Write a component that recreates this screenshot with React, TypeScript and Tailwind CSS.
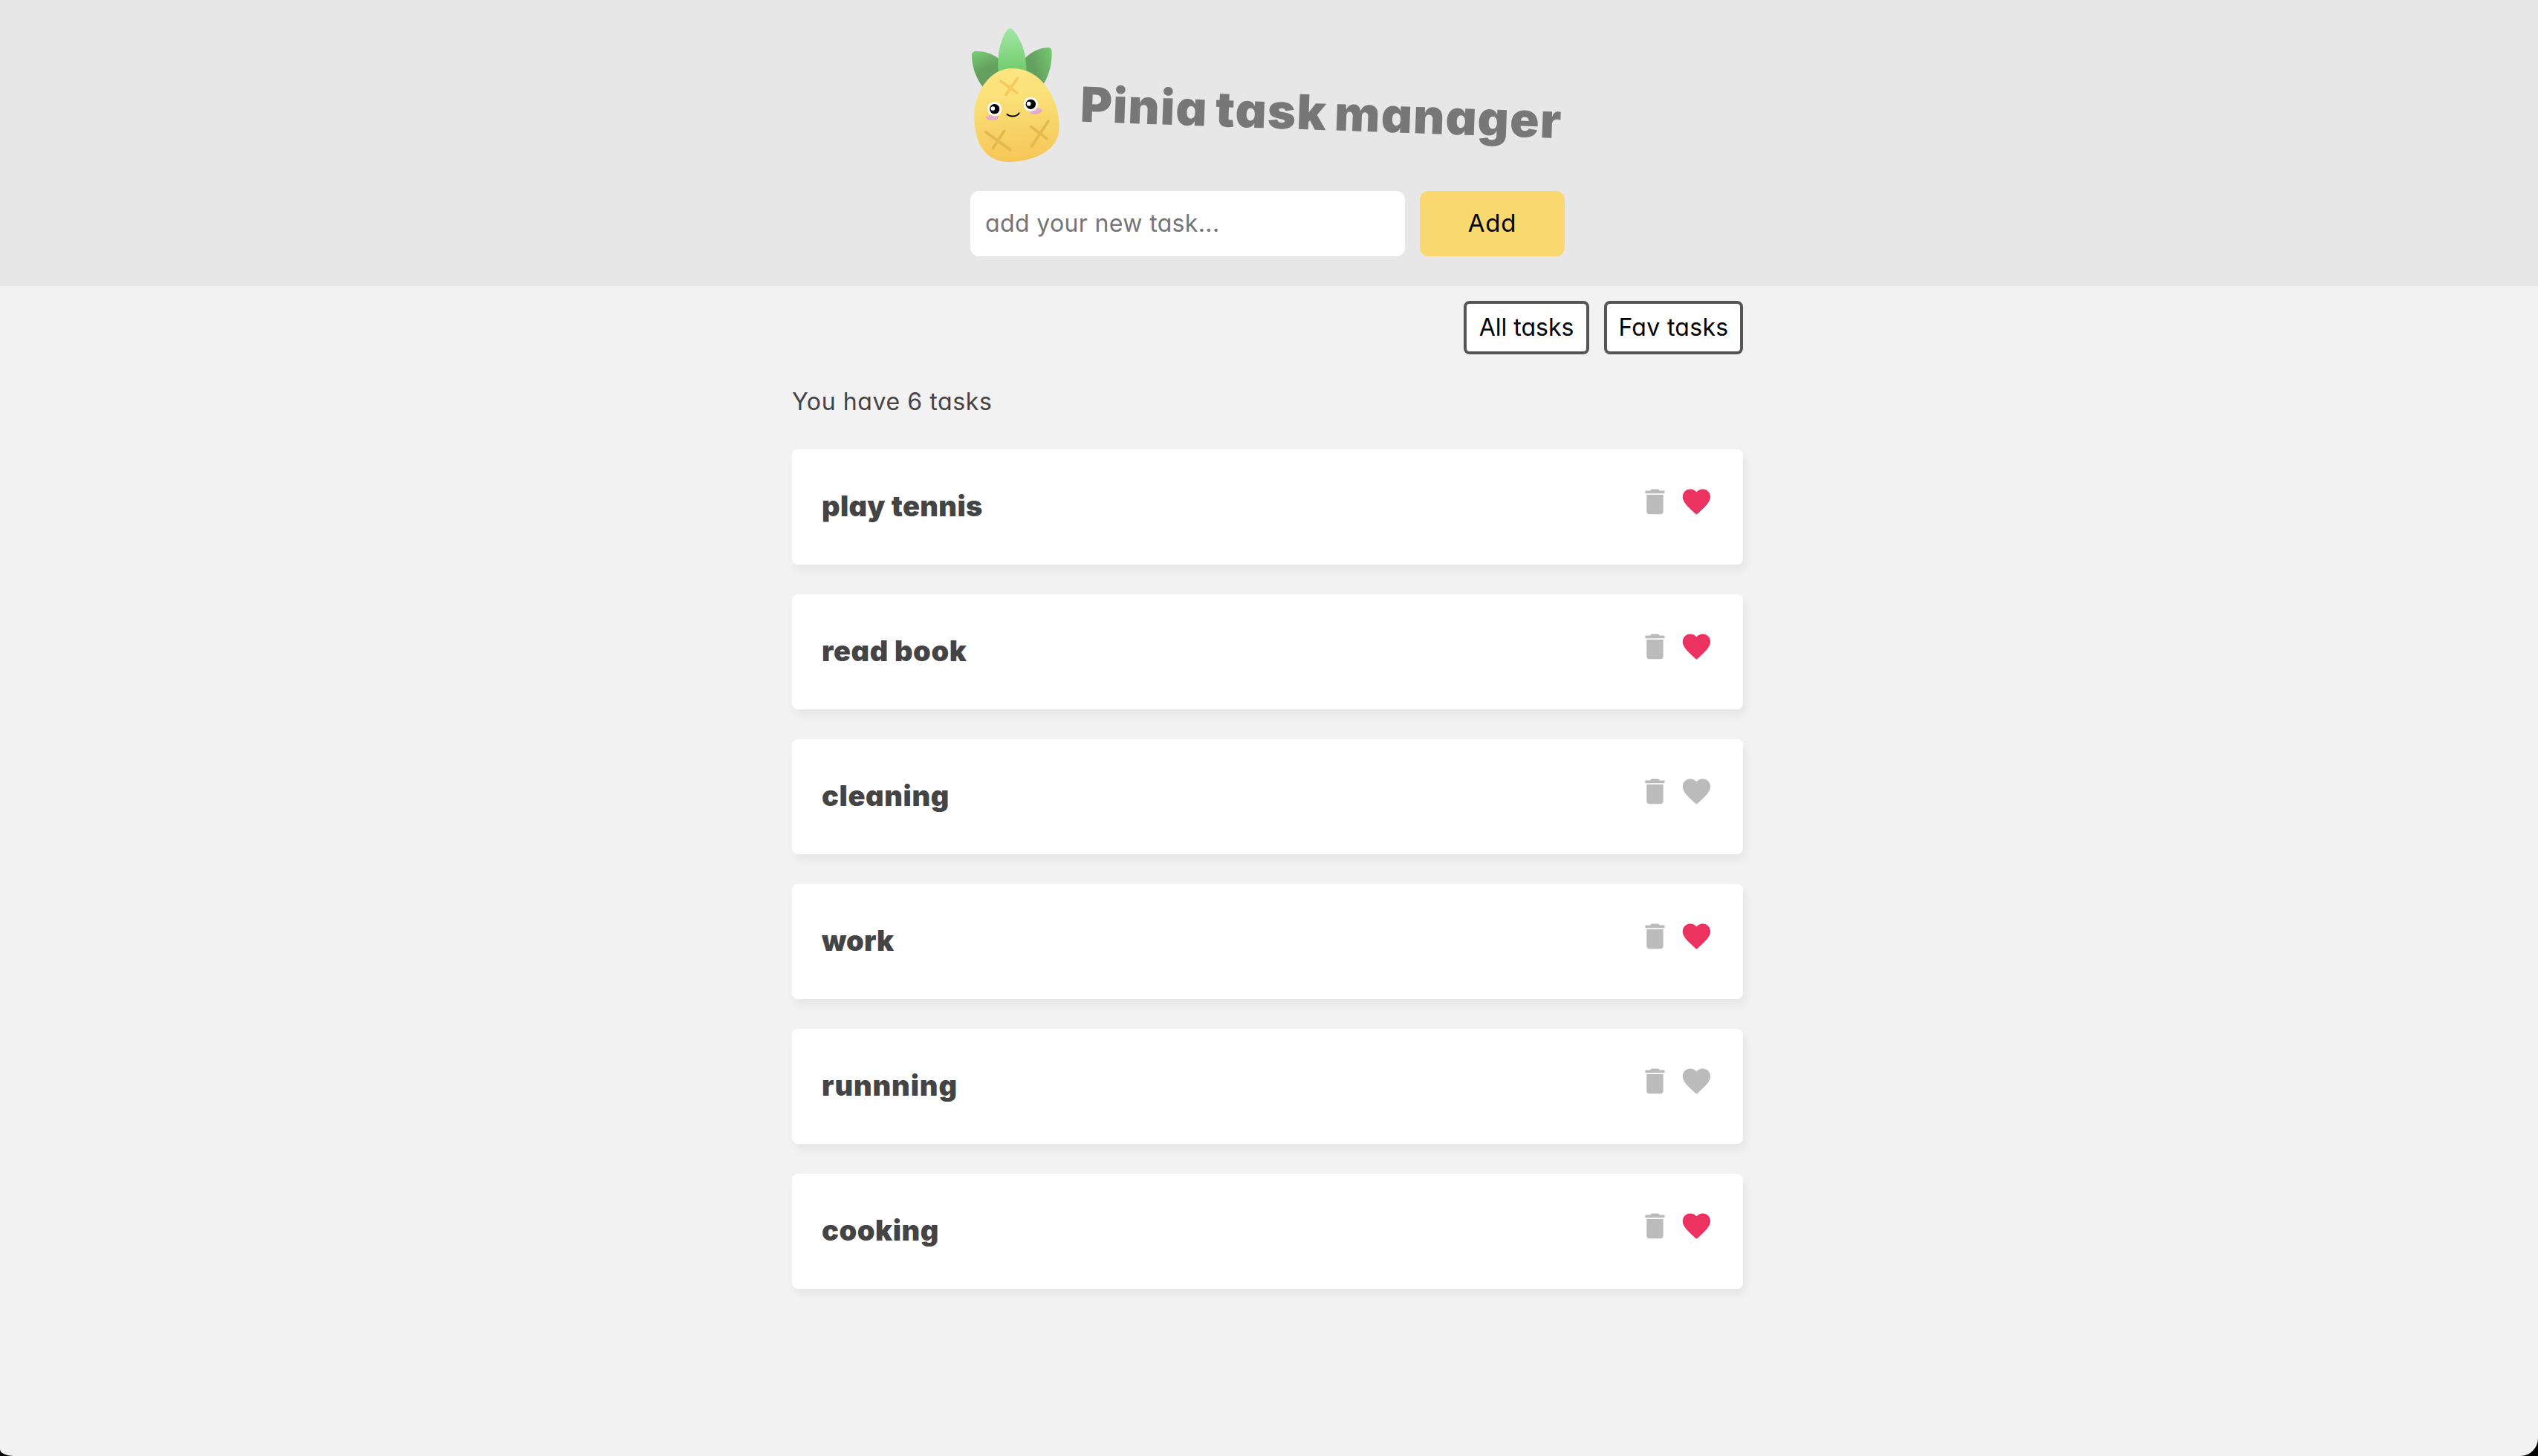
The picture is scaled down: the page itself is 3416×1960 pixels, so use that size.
import React from "react";

type Task = { id: number; title: string; isFav: boolean; tracking: string };

const TASKS: Task[] = [
  { id: 1, title: "play tennis", isFav: true, tracking: "tracking-[0.35px]" },
  { id: 2, title: "read book", isFav: true, tracking: "tracking-[0.6px]" },
  { id: 3, title: "cleaning", isFav: false, tracking: "tracking-[0.64px]" },
  { id: 4, title: "work", isFav: true, tracking: "tracking-[0.1px]" },
  { id: 5, title: "runnning", isFav: false, tracking: "tracking-[0.9px]" },
  { id: 6, title: "cooking", isFav: true, tracking: "tracking-[0.55px]" },
];

function Pineapple() {
  return (
    <svg className="block h-[182px] w-[121px] shrink-0" viewBox="48 51 363 546" fill="none">
      <defs>
        <linearGradient id="leafMid" x1="208" y1="54" x2="216" y2="230" gradientUnits="userSpaceOnUse">
          <stop stopColor="#a3e8a6" />
          <stop offset="0.85" stopColor="#78cf74" />
          <stop offset="1" stopColor="#74cb70" />
        </linearGradient>
        <linearGradient id="leafLeft" x1="72" y1="150" x2="120" y2="265" gradientUnits="userSpaceOnUse">
          <stop stopColor="#77ca72" />
          <stop offset="0.62" stopColor="#64a05f" />
          <stop offset="1" stopColor="#669f61" />
        </linearGradient>
        <linearGradient id="leafRight" x1="382" y1="165" x2="286" y2="200" gradientUnits="userSpaceOnUse">
          <stop stopColor="#74c76f" />
          <stop offset="0.85" stopColor="#64a05f" />
          <stop offset="1" stopColor="#64a05f" />
        </linearGradient>
        <linearGradient id="fruit" x1="215" y1="216" x2="240" y2="594" gradientUnits="userSpaceOnUse">
          <stop stopColor="#fce680" />
          <stop offset="0.25" stopColor="#fbe27b" />
          <stop offset="1" stopColor="#f5c656" />
        </linearGradient>
      </defs>
      <path d="M99 293C66 248 54 203 54 162C54 152 61 147 72 147C106 147 137 156 162 177V262Z" fill="url(#leafLeft)" />
      <path d="M342 282C369 240 378 194 377 147C377 137 371 132 360 132C326 134 296 148 270 174V250Z" fill="url(#leafRight)" />
      <path d="M161 240C155 170 165 104 199 58C205 52 212 52 218 58C255 100 278 160 273 240Z" fill="url(#leafMid)" />
      <path d="M217 216C128 216 64 308 64 412C64 520 109 594 204 594C300 591 407 551 407 455C407 333 333 216 217 216Z" fill="url(#fruit)" />
      <g strokeLinecap="round" strokeWidth="11.5">
        <path d="M171 268L237 315M238 257L192 322" stroke="#f7cb5b" />
        <path d="M110 473L209 545M184 470L140 537" stroke="#e3ba50" />
        <path d="M293 452L356 499M363 429L296 530" stroke="#e3ba50" />
      </g>
      <ellipse cx="136.500" cy="415" rx="25" ry="11" fill="#e4acca" />
      <ellipse cx="313" cy="389" rx="25.500" ry="12" fill="#e4acca" transform="rotate(-9 313 389)" />
      <circle cx="146" cy="380" r="29" fill="#fff" />
      <circle cx="292" cy="361" r="29" fill="#fff" />
      <circle cx="146" cy="380" r="20" fill="#000" />
      <circle cx="292" cy="361" r="20" fill="#000" />
      <circle cx="139" cy="378" r="8.500" fill="#fff" />
      <circle cx="284" cy="359" r="8.500" fill="#fff" />
      <path d="M196 401C207 413 235 413 245 397" stroke="#000" strokeWidth="5.500" strokeLinecap="round" />
    </svg>
  );
}

function TrashIcon() {
  return (
    <svg className="size-[44.8px] text-[#bbb]" viewBox="0 0 24 24" fill="currentColor">
      <path d="M6 19c0 1.100.9 2 2 2h8c1.100 0 2-.9 2-2V7H6v12zM19 4h-3.500l-1-1h-5l-1 1H5v2h14V4z" />
    </svg>
  );
}

function HeartIcon({ active }: { active: boolean }) {
  return (
    <svg className={active ? "size-[44.8px] text-[#eb3260]" : "size-[44.8px] text-[#bbb]"} viewBox="0 0 24 24" fill="currentColor">
      <path d="M12 21.350l-1.450-1.320C5.400 15.360 2 12.280 2 8.500 2 5.420 4.420 3 7.500 3c1.740 0 3.410.81 4.500 2.090C13.090 3.810 14.760 3 16.500 3 19.580 3 22 5.420 22 8.500c0 3.780-3.400 6.860-8.550 11.540L12 21.350z" />
    </svg>
  );
}

function TaskCard({ task }: { task: Task }) {
  return (
    <li className="flex h-[155px] items-start justify-between rounded-lg bg-white px-10 shadow-[4px_8px_12px_rgba(0,0,0,0.05)]">
      <h3 className={`pt-[46px] text-[38px] leading-[60px] font-black ${task.tracking}`}>{task.title}</h3>
      <div className="mt-[48px] flex gap-[11.5px]">
        <TrashIcon />
        <HeartIcon active={task.isFav} />
      </div>
    </li>
  );
}

export default function App() {
  return (
    <div className="h-[1960px] bg-black font-['Inter',sans-serif] text-[32px] text-[#444] [font-feature-settings:'cv11']">
      <div className="flex h-full flex-col overflow-hidden rounded-br-[24px] rounded-bl-[18px_9px] bg-[#f2f2f2]">
        <header className="h-[385px] bg-[#e7e7e7] pt-[37px] pr-1">
          <div className="mx-auto w-[800px]">
            <div className="flex h-[182px]">
              <Pineapple />
              <h1 className="mt-[69px] ml-[27px] h-[92px] rotate-2 text-[65px] leading-[92px] font-black tracking-[1.3px] [word-spacing:-4px] whitespace-nowrap text-[#777]">
                Pinia task manager
              </h1>
            </div>
            <form className="mt-[38px] flex gap-5">
              <input
                className="h-[88px] w-[585px] rounded-xl bg-white px-5 pb-0.5 tracking-[0.36px] placeholder:text-[#757575]"
                placeholder="add your new task..."
              />
              <button type="button" className="h-[88px] w-[195px] rounded-xl bg-[#f9d86f] text-[33px] tracking-[0.7px] text-black">
                Add
              </button>
            </form>
          </div>
        </header>
        <div className="pr-1">
          <main className="mx-auto w-[1280px]">
            <nav className="mt-5 flex justify-end gap-5">
              <button className="h-[72px] w-[169px] rounded-lg border-4 border-[#555] bg-white pb-px text-black">All tasks</button>
              <button className="h-[72px] w-[187px] rounded-lg border-4 border-[#555] bg-white pb-px tracking-[0.32px] text-black">Fav tasks</button>
            </nav>
            <p className="mt-10 h-[48px] leading-[48px] tracking-[0.6px]">You have 6 tasks</p>
            <ul className="mt-10 flex flex-col gap-10">
              {TASKS.map((task) => (
                <TaskCard key={task.id} task={task} />
              ))}
            </ul>
          </main>
        </div>
      </div>
    </div>
  );
}
